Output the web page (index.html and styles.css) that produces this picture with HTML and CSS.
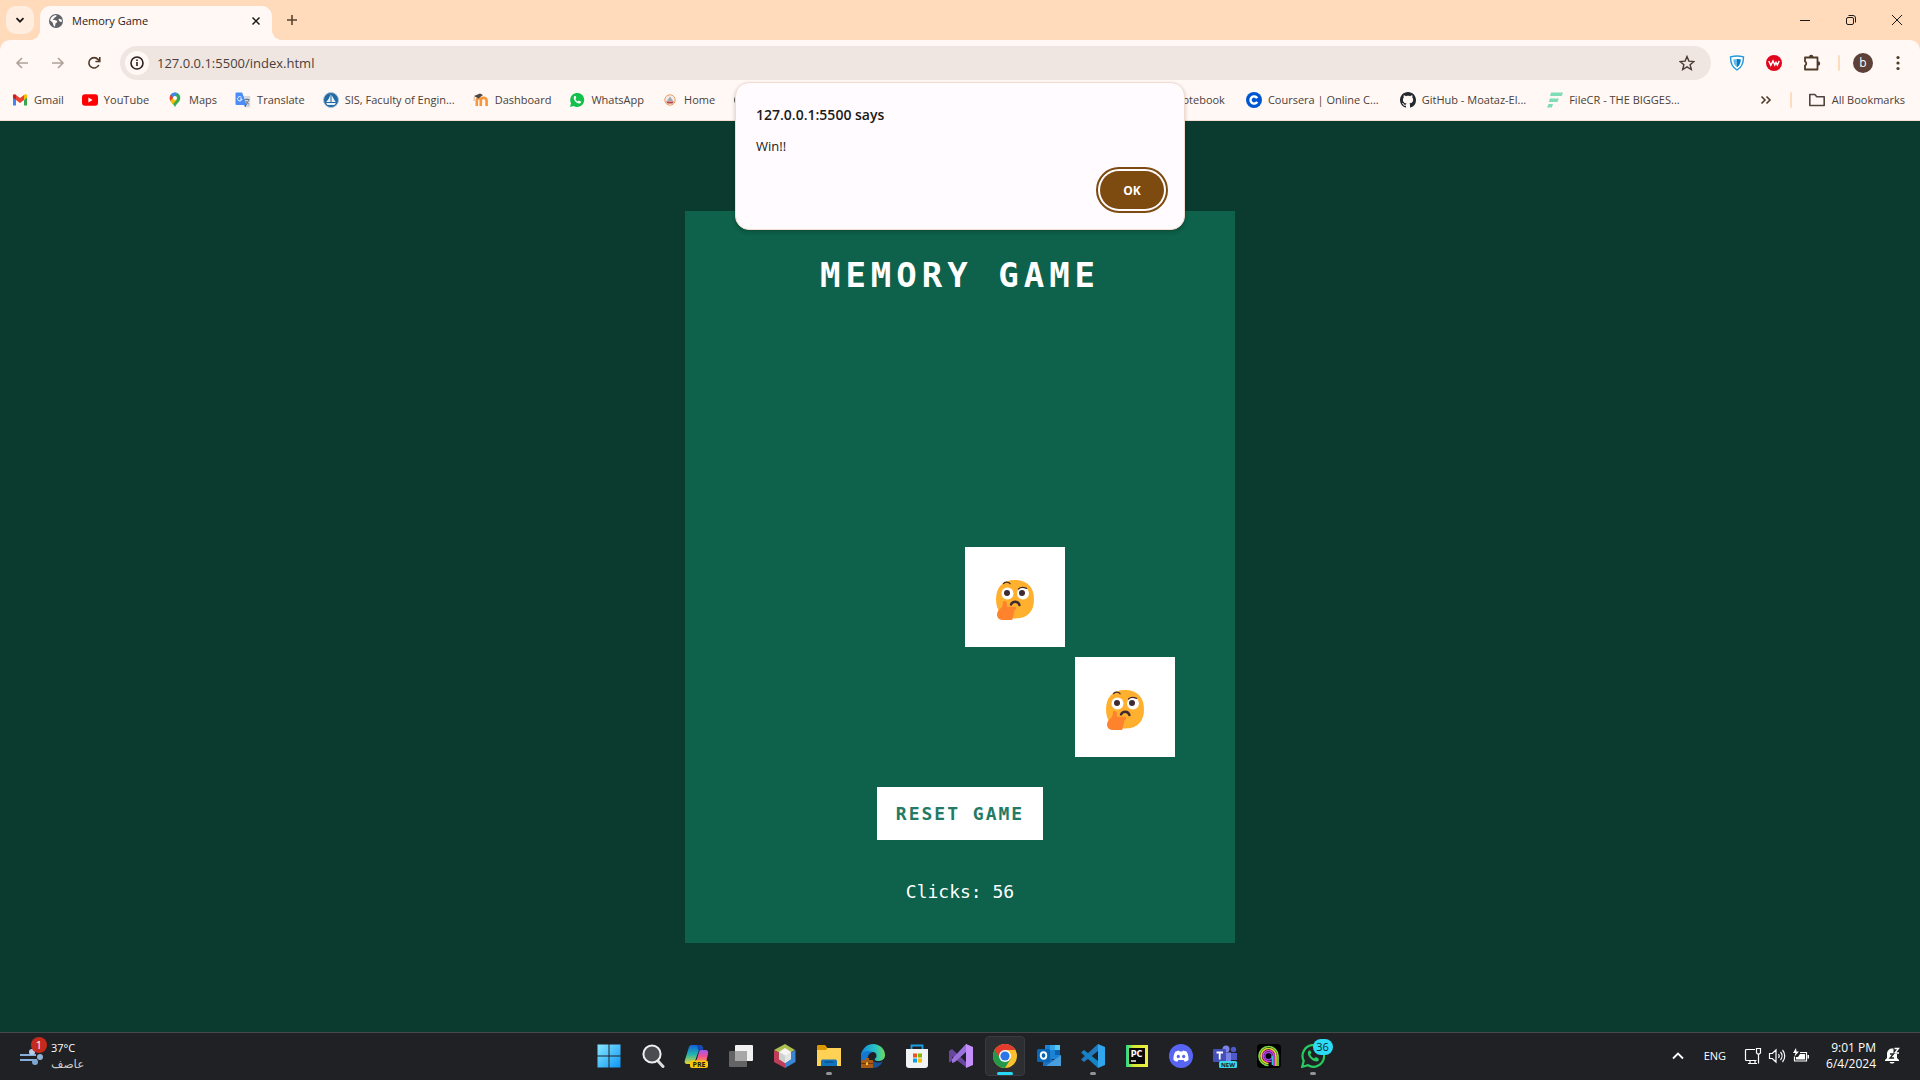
FILE: index.html
```html
<!DOCTYPE html>
<html lang="en">
<head>
<meta charset="utf-8">
<title>Memory Game</title>
<link rel="stylesheet" href="styles.css">
</head>
<body>
<svg class="defs" aria-hidden="true">
  <symbol id="thinking" viewBox="0 0 38 40">
    <path fill="#ffb02e" d="M19 0C32 0 38 8 38 19.500S32 38.500 19 38.500 0 31 0 19.500 6 0 19 0z"/>
    <circle cx="11.500" cy="13.500" r="6" fill="#fff"/><circle cx="27" cy="13.500" r="6" fill="#fff"/>
    <circle cx="11" cy="13" r="3" fill="#402a32"/><circle cx="26" cy="13" r="3" fill="#402a32"/>
    <path d="M7.500 3.500c2-1.800 5-1.800 6.500.2M22.500 9c2-2 5.500-1.800 8-.6" fill="none" stroke="#402a32" stroke-width="1.300" stroke-linecap="round"/>
    <path d="M15 24.500c1.500-3.600 7-4 8.500.6" fill="none" stroke="#402a32" stroke-width="2.400" stroke-linecap="round"/>
    <path fill="#ff822d" d="M7 22c.4-1.500 3.500-1.500 3.700.7l.4 4H18.500c2.200 0 2.200 2.800.3 3-.5 1-.7 2-1 3.500-.2 1.500-.4 2.300-.8 3-.2 2-.4 3.800-1.500 3.800H7C3 40 1 37.500 1 34.500c0-3 2-5 4-6.500 1.500-1.500 2-4 2-6z"/>
  </symbol>
</svg>

<header class="browser">
  <div class="tabstrip">
    <button class="tab-search" aria-label="Search tabs"><svg width="10" height="10" viewBox="0 0 10 10"><path d="M1.500 3.200 5 6.700l3.500-3.500" class="line line--bold"/></svg></button>
    <div class="tab">
      <svg width="16" height="16" viewBox="0 0 16 16"><circle cx="8" cy="8" r="7" fill="#5f6368"/><path d="M2 7.200C3 4 5 2.200 8.300 2c.6 1.600-.3 2-1.700 2.500-.2 1.500-1.600 1.200-1.600 2.500 2 0 4 .2 4.300 1.500.1 1.500-1.800 1.200-2 2.600 0 1 .2 1.900-.8 2.600C4.500 11.500 5.500 10 4 9zM10.500 6c1.300-1 2.500.3 3.300.8l.1 2.200c-1.500.4-3.200-.8-3.400-3z" fill="#fff8f5"/></svg>
      <span class="tab-title">Memory Game</span>
      <button class="tab-close" aria-label="Close tab"><svg width="10" height="10" viewBox="0 0 10 10"><path d="m1.500 1.500 7 7m0-7-7 7" class="line line--cross"/></svg></button>
    </div>
    <button class="tab-new" aria-label="New tab"><svg width="12" height="12" viewBox="0 0 12 12"><path d="M6 1v10M1 6h10" stroke="#5a432e" stroke-width="1.600"/></svg></button>
    <div class="window-buttons">
      <button aria-label="Minimize"><svg width="12" height="12" viewBox="0 0 12 12"><path d="M1 6.500h10" class="line"/></svg></button>
      <button aria-label="Restore"><svg width="12" height="12" viewBox="0 0 12 12"><rect x="1.500" y="3.500" width="7" height="7" rx="1.500" class="line"/><path d="M3.500 1.500h4.500a2.500 2.500 0 0 1 2.500 2.500v4.500" class="line"/></svg></button>
      <button aria-label="Close"><svg width="12" height="12" viewBox="0 0 12 12"><path d="m1 1 10 10M11 1 1 11" class="line"/></svg></button>
    </div>
  </div>

  <div class="toolbar">
    <nav class="history">
      <button class="faded" aria-label="Back"><svg width="14" height="14" viewBox="0 0 14 14"><path d="M13 7H2m5-5L2 7l5 5" class="tool"/></svg></button>
      <button class="faded" aria-label="Forward"><svg width="14" height="14" viewBox="0 0 14 14"><path d="M1 7h11M7 2l5 5-5 5" class="tool"/></svg></button>
      <button aria-label="Reload"><svg width="14" height="14" viewBox="0 0 14 14"><path d="M11.800 9A5.200 5.200 0 1 1 11 3.400L12.600 5M12.800 1v4.500H8.400" class="tool"/></svg></button>
    </nav>
    <div class="omnibox">
      <span class="site-info"><svg width="14" height="14" viewBox="0 0 14 14"><circle cx="7" cy="7" r="6" fill="none" stroke="#2a211c" stroke-width="1.600"/><path d="M7 6v4M7 3.600v1.500" stroke="#2a211c" stroke-width="1.600"/></svg></span>
      <input class="address" type="text" aria-label="Address" value="127.0.0.1:5500/index.html">
      <button aria-label="Bookmark this page"><svg width="16" height="16" viewBox="0 0 16 16"><path d="m8 1.500 1.900 4.600 5 .4-3.800 3.200 1.200 4.800L8 11.900l-4.300 2.600 1.200-4.800L1.100 6.500l5-.4z" fill="none" stroke="#4a3c33" stroke-width="1.400"/></svg></button>
    </div>
    <div class="extensions">
      <button aria-label="VPN shield"><svg width="16" height="16" viewBox="0 0 16 16"><path d="M8 1c2.500 0 4.500.4 6.500.9C14.500 8 12.500 12.500 8 15 3.500 12.500 1.500 8 1.500 1.900 3.500 1.400 5.500 1 8 1z" fill="#fff" stroke="#2499da" stroke-width="1.400"/><path d="M8 4c1.500 0 2.500.2 3.700.5C11.500 8 10.500 10.500 8 12.300 5.500 10.500 4.500 8 4.300 4.500 5.500 4.200 6.500 4 8 4z" fill="#61b9e9"/><path d="M8 4v8.300C10.500 10.500 11.500 8 11.700 4.500 10.500 4.200 9.500 4 8 4z" fill="#0878c5"/></svg></button>
      <button aria-label="VW extension"><svg width="16" height="16" viewBox="0 0 16 16"><circle cx="8" cy="8" r="8" fill="#e2061c"/><path d="m2.800 6 2 4.300L7 6l1.800 4L10 7.500l1.300 2.600L13.200 6" fill="none" stroke="#fff" stroke-width="1.500"/></svg></button>
      <button aria-label="Extensions"><svg width="18" height="18" viewBox="0 0 18 18"><path d="M2 3.500h12.500v12H2v-4a2.200 2.200 0 0 0 0-4z" fill="none" stroke="#4f3b2a" stroke-width="1.800" stroke-linejoin="round"/><path d="M6 3a2.200 2.200 0 0 1 4.400 0zM15 7.300a2.200 2.200 0 0 1 0 4.400z" fill="#4f3b2a"/></svg></button>
      <span class="divider"></span>
      <button class="avatar" aria-label="Profile">b</button>
      <button aria-label="Menu"><svg width="16" height="16" viewBox="0 0 16 16" fill="#4f3b2a"><circle cx="8" cy="2.500" r="1.600"/><circle cx="8" cy="8" r="1.600"/><circle cx="8" cy="13.500" r="1.600"/></svg></button>
    </div>
  </div>

  <nav class="bookmarks">
    <div class="bookmark-group">
      <a href="#"><svg width="16" height="16" viewBox="0 0 16 16"><path d="M1 4v9.500h3V8z" fill="#4285f4"/><path d="M12 8v5.500h3V4z" fill="#34a853"/><path d="M1 4.500V3.700C1 2 2.800 1.800 4 2.800V8L1 5.700z" fill="#c5221f"/><path d="m4 3 4 3 4-3v5l-4 3-4-3z" fill="#ea4335"/><path d="M12 2.800c1.200-1 3-.8 3 .9v2L12 8z" fill="#fbbc04"/></svg><span>Gmail</span></a>
      <a href="#"><svg width="16" height="16" viewBox="0 0 16 16"><rect y="2.300" width="16" height="11.400" rx="3" fill="#f00"/><path d="M6.400 5.600v4.800L10.600 8z" fill="#fff"/></svg><span>YouTube</span></a>
      <a href="#"><svg width="16" height="16" viewBox="0 0 16 16"><path d="M8 .5A5.300 5.300 0 0 0 2.700 6c0 4 4.300 5.500 5.300 9.500 1-4 5.300-5.500 5.300-9.500A5.300 5.300 0 0 0 8 .5z" fill="#34a853"/><path d="M8 .5A5.300 5.300 0 0 0 3.500 3l3 2.700 4-4.600A6 6 0 0 0 8 .5z" fill="#4285f4"/><path d="M3.500 3 6.500 5.700 3.300 9C2.500 7 2.500 4.500 3.500 3z" fill="#ea4335"/><path d="m3.300 9 3.200-3.500L9.800 8l-4 4.200C4.800 11 3.800 10 3.300 9z" fill="#fbbc04"/><circle cx="8" cy="6" r="2" fill="#fff"/></svg><span>Maps</span></a>
      <a href="#"><svg width="16" height="16" viewBox="0 0 16 16"><path d="M6 4h9.200v11.300H9z" fill="#d5d9de"/><path d="M9 12h3l-1.800 3.300z" fill="#3454c9"/><path d="M1.500.5h5.700L11.500 13H1.500a1 1 0 0 1-1-1V1.500a1 1 0 0 1 1-1z" fill="#4b8df8"/><path d="M6.500 5.400A2.200 2.200 0 1 0 7 7H5" fill="none" stroke="#fff"/><path d="M9.500 7.500h5M12 6.500v1.200M13.600 7.700c-.3 2-1.400 3.500-3 4.300m.2-3c.6 1.500 1.700 2.600 3.200 3.300" stroke="#6c7a87" fill="none"/></svg><span>Translate</span></a>
      <a href="#"><svg width="16" height="16" viewBox="0 0 16 16"><circle cx="8" cy="8" r="7.500" fill="#2369a5" stroke="#a8bfd1"/><path d="M7.500 2v8H3.200c2-2 3.600-5 4.300-8zM8.500 3c1.600 2.500 2.400 4.500 4.300 7H8.500zM3 11h10l-1.500 2h-7z" fill="#e8f3f8"/></svg><span>SIS, Faculty of Engin...</span></a>
      <a href="#"><svg width="16" height="16" viewBox="0 0 16 16"><path d="M3.800 14V8.500c0-3 4-3 4 0V14m0-5.500c0-3.500 5.800-3.500 5.800 0V14" fill="none" stroke="#f7953a" stroke-width="2.600"/><path d="m1 4 6-2.500L10 3 5.500 6.500z" fill="#4b4744"/><path d="M1.500 4 1 9" stroke="#d8b79c"/></svg><span>Dashboard</span></a>
      <a href="#"><svg width="16" height="16" viewBox="0 0 16 16"><path d="m1 15 1-3.800A7 7 0 1 1 4.700 14z" fill="#12c04b"/><path d="M5.500 4c-3 3 3.500 9.500 6.500 6.800l-.2-1.400-1.900-.8-1 1C7.600 9 6.700 8 6.400 7l.9-.9L6.600 4z" fill="#fff"/></svg><span>WhatsApp</span></a>
      <a href="#"><svg width="16" height="16" viewBox="0 0 16 16"><circle cx="8" cy="8" r="5.200" fill="#f7ede6" stroke="#ed9c60"/><path d="M8 4.500 4.800 9h6.400z" fill="#9eabb5"/><path d="M4 9.500h8l-1.500 2h-5z" fill="#b9423c"/></svg><span>Home</span></a>
      <a href="#" aria-label="Bookmark"><svg width="16" height="16" viewBox="0 0 16 16"><circle cx="7" cy="8" r="5" fill="none" stroke="#555" stroke-width="2"/></svg></a>
    </div>
    <div class="bookmark-group bookmark-group--end">
      <a href="#"><span>Notebook</span></a>
      <a href="#"><svg width="16" height="16" viewBox="0 0 16 16"><circle cx="8" cy="8" r="8" fill="#0056d2"/><path d="M11.200 9.800a3.600 3.600 0 1 1 0-3.600" fill="none" stroke="#fff" stroke-width="2.400"/></svg><span>Coursera | Online C...</span></a>
      <a href="#"><svg width="16" height="16" viewBox="0 0 16 16"><path fill="#24292f" d="M8 0C3.580 0 0 3.580 0 8c0 3.540 2.290 6.530 5.470 7.590.4.070.55-.17.55-.38 0-.19-.01-.82-.01-1.490-2.010.37-2.530-.49-2.690-.94-.09-.23-.48-.94-.82-1.130-.28-.15-.68-.52-.01-.53.63-.01 1.080.58 1.230.82.720 1.210 1.870.87 2.330.66.070-.52.280-.87.510-1.070-1.780-.2-3.640-.89-3.640-3.950 0-.87.310-1.590.82-2.150-.08-.2-.36-1.020.08-2.120 0 0 .67-.21 2.200.82.640-.18 1.320-.27 2-.27s1.360.09 2 .27c1.530-1.040 2.200-.82 2.200-.82.440 1.100.160 1.920.080 2.120.510.560.820 1.270.820 2.150 0 3.070-1.870 3.750-3.650 3.950.290.250.540.730.540 1.480 0 1.070-.01 1.930-.01 2.200 0 .21.150.46.550.38A8 8 0 0 0 16 8c0-4.420-3.580-8-8-8z"/></svg><span>GitHub - Moataz-El...</span></a>
      <a href="#"><svg width="16" height="16" viewBox="0 0 16 16" fill="#7fdcb8"><path d="M4 .5h12L14.700 4H3zM2.800 6.500h9L10.500 10H1.800zM1.500 12H6l-1.200 3.500H0z"/></svg><span>FileCR - THE BIGGES...</span></a>
    </div>
    <button class="more" aria-label="More bookmarks"><svg width="12" height="10" viewBox="0 0 12 10"><path d="m1.500 1.500 3.500 3.500-3.500 3.500m5-7L10 5 6.500 8.500" class="tool"/></svg></button>
    <span class="divider"></span>
    <a class="all" href="#"><svg width="18" height="16" viewBox="0 0 18 16"><path d="M1.800 2.500h5l2 2.300h7.400v8.700H1.800z" fill="none" stroke="#4f453e" stroke-width="1.600" stroke-linejoin="round"/></svg><span>All Bookmarks</span></a>
  </nav>
</header>

<main class="page">
  <section class="game">
    <h2 class="game-title">MEMORY GAME</h2>
    <div class="board">
      <div class="tile tile--matched"></div><div class="tile tile--matched"></div><div class="tile tile--matched"></div><div class="tile tile--matched"></div>
      <div class="tile tile--matched"></div><div class="tile tile--matched"></div><div class="tile tile--matched"></div><div class="tile tile--matched"></div>
      <div class="tile tile--matched"></div><div class="tile tile--matched"></div><div class="tile"><svg width="38" height="40"><use href="#thinking"/></svg></div><div class="tile tile--matched"></div>
      <div class="tile tile--matched"></div><div class="tile tile--matched"></div><div class="tile tile--matched"></div><div class="tile"><svg width="38" height="40"><use href="#thinking"/></svg></div>
    </div>
    <button class="reset">RESET GAME</button>
    <p class="clicks">Clicks: 56</p>
  </section>
</main>

<div class="alert" role="alertdialog" aria-labelledby="alert-title" aria-describedby="alert-text">
  <h1 id="alert-title">127.0.0.1:5500 says</h1>
  <p id="alert-text">Win!!</p>
  <button class="alert-ok">OK</button>
</div>

<footer class="taskbar">
  <button class="weather">
    <span class="weather-icon"><svg width="26" height="28" viewBox="0 0 26 28"><path d="M1 13h16M1 18h17" stroke="#86aedb" stroke-width="2"/><circle cx="13" cy="10" r="3" fill="#b8cce5"/><circle cx="21" cy="15" r="3" fill="#91b0d5"/><circle cx="16" cy="20" r="3" fill="#7ea6d3"/></svg><span class="weather-badge">1</span></span>
    <span class="weather-text"><span>37°C</span><span class="weather-state" lang="ar" dir="rtl">عاصف</span></span>
  </button>
  <div class="apps">
    <button aria-label="Start"><svg width="24" height="24" viewBox="0 0 24 24"><defs><linearGradient id="win" x2="1" y2="1" gradientUnits="userSpaceOnUse" x1="0" y1="0" gradientTransform="scale(24)"><stop stop-color="#8aeaff"/><stop offset="1" stop-color="#0a94f5"/></linearGradient></defs><path d="M.5.5h11v11H.5zM12.500.5h11v11h-11zM.5 12.500h11v11H.5zM12.500 12.500h11v11h-11z" fill="url(#win)"/></svg></button>
    <button aria-label="Search"><svg width="24" height="24" viewBox="0 0 24 24"><path d="m17 17 5 5.500" stroke="#ddd" stroke-width="3" stroke-linecap="round"/><circle cx="11" cy="10" r="8.600" fill="#4b4c50" stroke="#efefef" stroke-width="2"/></svg></button>
    <button aria-label="Copilot"><svg width="26" height="24" viewBox="0 0 26 24"><defs><linearGradient id="cpA" x2="0" y2="1"><stop stop-color="#1261d8"/><stop offset=".5" stop-color="#22b5ae"/><stop offset="1" stop-color="#e7d531"/></linearGradient><linearGradient id="cpB" x2="0" y2="1"><stop stop-color="#9b5cf5"/><stop offset=".5" stop-color="#ed4f99"/><stop offset="1" stop-color="#ff9545"/></linearGradient></defs><path d="M8 1h8c2 0 3 2 3 4l-4 1-4 11c-1 2-2 3-4 3H3c-2 0-3-2-2-4L5 3c.5-1.500 1.500-2 3-2z" fill="url(#cpA)"/><path d="M13 1h3c2 0 2.500 2 3 5h-5z" fill="#1747b5"/><path d="M17 6h4c3 0 3.500 2 3 4l-2 8H9c2 0 3-1 4-3l2-7c.4-1.300 1-2 2-2z" fill="url(#cpB)"/><rect x="6" y="16.500" width="18" height="7.500" rx="2" fill="#fdc60b"/><text x="15" y="23" class="tag">PRE</text></svg></button>
    <button aria-label="Task view"><svg width="24" height="24" viewBox="0 0 24 24"><rect x="6" y="1" width="18" height="16" rx="1" fill="#f1f1f1"/><rect y="7" width="18" height="16" rx="1" fill="#646465"/><path d="M6 7h12v10H6z" fill="#a7a7a8"/></svg></button>
    <button aria-label="NetBeans"><svg width="24" height="24" viewBox="0 0 24 24"><path d="m12 0 10 6-10 6L1 6z" fill="#b0bf51"/><path d="m1 6 11 6v12L1 18z" fill="#be3d58"/><path d="M22.500 6 12 12v12l10.500-6z" fill="#3986d5"/><path d="m12 4 6 4v7l-6 4-6-4V8z" fill="#f5f5f5"/><path d="m6 8 6 3.500V19l-6-4z" fill="#ccd0ce"/><path d="m12 11.500 6-3.500v7l-6 4z" fill="#e4e6e6"/></svg></button>
    <button class="running" aria-label="File Explorer"><svg width="24" height="24" viewBox="0 0 24 24"><path d="M0 2.500C0 1.500.6 1 1.500 1H8l2.500 3H24v3H0z" fill="#dc9800"/><path d="M0 6h9l1.500-2H24v18H0z" fill="#ffd154"/><path d="M4 22v-4.500C4 16 5 15.500 6 15.500h12c1 0 2 .5 2 2V22z" fill="#1273bd"/><path d="M7.500 18h9" stroke="#084f91" stroke-width="1.500"/></svg></button>
    <button aria-label="Edge"><svg width="24" height="24" viewBox="0 0 24 24"><defs><linearGradient id="edge"><stop stop-color="#1689dc"/><stop offset=".6" stop-color="#27c3c5"/><stop offset="1" stop-color="#6ddc5c"/></linearGradient></defs><path d="M0 16V10C2 4 6 0 12 0c7 0 12 5 12 11 0 4-3 6-7 6-3 0-4-1-3-2.200 1-1 1.500-1.800 1.500-2.800A4 4 0 0 0 11.500 8C7 8 5 12 6 17z" fill="url(#edge)"/><path d="M0 11c2-4 7-5 11.500-3C8 9 6 12 7 17H0z" fill="#1477d1"/><path d="M12 17c3 2 8 2 10 0-2 4-5 7-10 7z" fill="#155499"/><path d="M4 16v-2h4v2M0 16h12v8H0z" fill="#a85c16"/><path d="M0 19.500h12" stroke="#733605"/><path d="M5 18.500h2v2.500H5z" fill="#ffc53d"/></svg></button>
    <button aria-label="Microsoft Store"><svg width="24" height="24" viewBox="0 0 24 24"><path d="M6.500 7V1.500h11V7" fill="none" stroke="#18a2e5" stroke-width="1.800"/><path d="M1 5h22v16c0 2-1 3-3 3H4c-2 0-3-1-3-3z" fill="#f2f3f4"/><path d="M8 9.500h4v4H8z" fill="#f25022"/><path d="M13 9.500h4v4h-4z" fill="#7fba00"/><path d="M8 14.500h4v4H8z" fill="#00a4ef"/><path d="M13 14.500h4v4h-4z" fill="#ffb900"/></svg></button>
    <button aria-label="Visual Studio"><svg width="24" height="24" viewBox="0 0 24 24"><path d="M0 7 3 5l15 14v5L3 12.500V17l-3 1.500z" fill="#6a479f"/><path d="M3 19v-4L17 0h1v7L6 18z" fill="#9b72dd"/><path d="m17 0 7 3v18l-7 3z" fill="#c48ffb"/></svg></button>
    <button class="active" aria-label="Chrome"><svg width="24" height="24" viewBox="0 0 24 24"><circle cx="12" cy="12" r="12" fill="#fbc02d"/><path d="M12 12 1.600 6A12 12 0 0 0 12 24l5.500-9z" fill="#24984b"/><path d="M1.600 6a12 12 0 0 1 20.800 0H12l-5 8z" fill="#e33b2e"/><circle cx="12" cy="12" r="6" fill="#fff"/><circle cx="12" cy="12" r="4.600" fill="#2d76e8"/></svg></button>
    <button aria-label="Outlook"><svg width="24" height="24" viewBox="0 0 24 24"><path d="M8 1h15v14H8z" fill="#1b82d6"/><path d="M13 1h5v5h-5z" fill="#35a6e9"/><path d="M18 6h5v5h-5z" fill="#0a62b1"/><path d="M18 1h5v5h-5z" fill="#58c7f5"/><path d="M6 12h3l7 4 8-5v11H6z" fill="#1d6fc0"/><path d="M24 11v11H9z" fill="#47a0dc"/><rect y="5" width="13" height="13" rx="1.500" fill="#0866b7"/><ellipse cx="6.500" cy="11.500" rx="2.800" ry="3.300" fill="none" stroke="#fff" stroke-width="1.900"/></svg></button>
    <button class="running" aria-label="Visual Studio Code"><svg width="24" height="24" viewBox="0 0 24 24"><path d="M17 0v7L3 18l-3-2.500z" fill="#2479bd"/><path d="M17 24v-7L3 6 0 8.500z" fill="#1584c6"/><path d="m17 0 7 3v18l-7 3z" fill="#31a5ed"/></svg></button>
    <button aria-label="PyCharm"><svg width="24" height="24" viewBox="0 0 24 24"><defs><linearGradient id="pc"><stop stop-color="#25d789"/><stop offset=".35" stop-color="#d6ea31"/><stop offset="1" stop-color="#f0ee43"/></linearGradient></defs><path d="M1 1h22v22H1z" fill="url(#pc)"/><path d="M4 4h16v16H4z" fill="#080808"/><text x="11.500" y="12.500" class="pc">PC</text><path d="M6 17h5" stroke="#fff" stroke-width="1.400"/></svg></button>
    <button aria-label="Discord"><svg width="24" height="24" viewBox="0 0 24 24"><circle cx="12" cy="12" r="12" fill="#5865f2"/><path d="M6.500 7.500 10 6.500l.7 1h2.600l.7-1 3.500 1c1.500 2 2.200 5 2 8.500-1.200 1-2.500 1.500-3.800 1.700l-1-1.700H9.300l-1 1.700C7 17.500 5.700 17 4.500 16c-.2-3.500.5-6.500 2-8.500z" fill="#fff"/><ellipse cx="9.300" cy="12.500" rx="1.600" ry="1.800" fill="#5865f2"/><ellipse cx="14.700" cy="12.500" rx="1.600" ry="1.800" fill="#5865f2"/></svg></button>
    <button aria-label="Teams"><svg width="24" height="24" viewBox="0 0 24 24"><circle cx="13" cy="5" r="3.500" fill="#7b83eb"/><circle cx="20.500" cy="5.500" r="2.700" fill="#5059c9"/><path d="M9 8.500h9V18H9z" fill="#7b83eb"/><path d="M18 9h6v7h-6z" fill="#5059c9"/><rect y="5" width="13" height="13" rx="1" fill="#4250b8"/><path d="M3.500 8.500h6.500M6.700 8.500v7" stroke="#fff" stroke-width="1.800"/><rect x="6" y="17" width="18" height="7" rx="1.500" fill="#38d7e8"/><text x="15" y="23" class="tag tag--small">NEW</text></svg></button>
    <button aria-label="Alike"><svg width="24" height="24" viewBox="0 0 24 24"><rect width="24" height="24" rx="4" fill="#000"/><g fill="none" stroke-width="1.700"><path d="M21 22V12a9.500 9.500 0 1 0-9.500 9.500" stroke="#79d941"/><path d="M19 22V12a7.500 7.500 0 1 0-7.500 7.500" stroke="#e5cf31"/><path d="M17 22V12a5.500 5.500 0 1 0-5.500 5.500h3" stroke="#e13fd2"/><circle cx="11.500" cy="12" r="3.700" stroke="#8f3ee3"/><path d="M15.500 12v9" stroke="#25c7d6"/></g></svg></button>
    <button class="running" aria-label="WhatsApp"><svg width="24" height="24" viewBox="0 0 24 24"><path d="m1.200 22.800 1.500-6A10.800 10.800 0 1 1 7 21.300z" fill="none" stroke="#27cb61" stroke-width="2.200"/><path d="M8 6.500c-4.500 4 5.500 14 9.800 10l-.3-2.200-2.800-1.200-1.500 1.500c-2-1-3.300-2.300-4-4l1.300-1.500L9.300 6.500z" fill="#27cb61"/></svg><span class="count">36</span></button>
  </div>
  <div class="tray">
    <button aria-label="Show hidden icons"><svg width="12" height="8" viewBox="0 0 12 8"><path d="m1 6.500 5-5 5 5" class="tray-line tray-line--bold"/></svg></button>
    <span class="language">ENG</span>
    <span class="status">
      <svg width="18" height="18" viewBox="0 0 18 18"><path d="M11 2.500H2.500a1 1 0 0 0-1 1v9a1 1 0 0 0 1 1h10M6 13.500v3m5-3v3m-7 0h9M14.500 7v9.500" class="tray-line"/><path d="M12.500 1.500h4V6l-2 1.500-2-1.500z" class="tray-line"/></svg>
      <svg width="18" height="18" viewBox="0 0 18 18"><path d="M1.500 6.500h2.800L8 3v12l-3.700-3.500H1.500zM10.500 7c.8 1.200.8 2.800 0 4M12.500 5c2 2.300 2 5.700 0 8M14.500 3c3 3.300 3 8.700 0 12" class="tray-line"/></svg>
      <svg width="18" height="18" viewBox="0 0 18 18"><path d="M8 5.500h6.500V14h-12V9.500" class="tray-line"/><path d="M8 7h5v5.500H4V10h2zM15.500 8H17v3.500h-1.500z" fill="#fff"/><path d="M4 1 1 6h2.500L2.500 9.500 7 4.500H4.500z" fill="#fff"/></svg>
    </span>
    <span class="clock"><span>9:01 PM</span><span>6/4/2024</span></span>
    <button aria-label="Notifications"><svg width="16" height="18" viewBox="0 0 16 18"><path d="M1 13 3 11V7c0-3 2-5.500 5-5.500 1 0 1 0 1.500.2V7H13v4l2 2v1H1zM5.500 15h5c-.8 2-4.200 2-5 0z" fill="#fff"/><path d="M10.500 1.500h4L11 6h4" stroke="#fff" stroke-width="1.400" fill="none"/><path d="M6 7h3.500L6 11h4" stroke="#222" stroke-width="1.300" fill="none"/></svg></button>
  </div>
</footer>
</body>
</html>
```
FILE: styles.css
```css
* { box-sizing: border-box; }

body {
  margin: 0;
  min-height: 100vh;
  display: flex;
  flex-direction: column;
  position: relative;
  overflow-x: hidden;
  font-family: "Open Sans", "Noto Sans", sans-serif;
  background: #0b3b2f;
}

button {
  border: 0;
  padding: 0;
  background: none;
  font: inherit;
  color: inherit;
  display: flex;
  align-items: center;
  justify-content: center;
}

svg { display: block; flex: none; }
.defs { position: absolute; width: 0; height: 0; }

.line { fill: none; stroke: #1d1b1a; stroke-width: 1; }
.line--bold { stroke-width: 1.8; }
.line--cross { stroke-width: 1.5; }
.tool { fill: none; stroke: #4f3b2a; stroke-width: 1.6; }
.faded { opacity: .45; }
.divider { width: 2px; height: 16px; border-radius: 1px; background: #ffdbbc; }

/* Browser window */
.browser { background: #ffdbbc; }

.tabstrip { display: flex; height: 40px; padding-left: 6px; }

.tab-search {
  width: 28px;
  height: 28px;
  margin: 6px 6px 0 0;
  border-radius: 10px;
  background: #ffede0;
}

.tab {
  position: relative;
  display: flex;
  align-items: center;
  width: 232px;
  margin-top: 6px;
  padding: 0 11px 4px 8px;
  gap: 8px;
  border-radius: 10px 10px 0 0;
  background: #fff8f5;
}

.tab::before,
.tab::after {
  content: "";
  position: absolute;
  bottom: 0;
  width: 10px;
  height: 10px;
}

.tab::before { right: 100%; background: radial-gradient(circle at 0 0, transparent 10px, #fff8f5 10px); }
.tab::after { left: 100%; background: radial-gradient(circle at 100% 0, transparent 10px, #fff8f5 10px); }

.tab-title { flex: 1; font-size: 11px; line-height: 16px; color: #2a211c; }
.tab-new { width: 28px; height: 28px; margin: 6px 0 0 6px; }

.window-buttons { display: flex; margin-left: auto; }
.window-buttons button { width: 46px; }

.toolbar {
  display: flex;
  align-items: center;
  height: 40px;
  padding: 6px 10px 0 14px;
  border-radius: 10px 10px 0 0;
  background: #fff8f5;
}

.history { display: flex; gap: 20px; width: 106px; }
.history button { width: 16px; }

.omnibox {
  display: flex;
  align-items: center;
  flex: 1;
  height: 34px;
  padding: 0 16px 0 5px;
  gap: 8px;
  border-radius: 17px;
  background: #f0e6e1;
}

.site-info {
  display: flex;
  align-items: center;
  justify-content: center;
  width: 24px;
  height: 24px;
  border-radius: 50%;
  background: #fff8f5;
}

.address {
  flex: 1;
  border: 0;
  padding: 0;
  background: none;
  font: 13px/20px "Open Sans", "Noto Sans", sans-serif;
  color: #4a4039;
}

.extensions { display: flex; align-items: center; gap: 13px; margin-left: 14px; }
.extensions button { padding: 0 4px; }

.extensions .avatar {
  width: 20px;
  height: 20px;
  padding: 0;
  border-radius: 50%;
  background: #5d4037;
  color: #fff;
  font-size: 12px;
  line-height: 20px;
}

.bookmarks {
  display: flex;
  align-items: center;
  height: 41px;
  padding: 0 15px 0 12px;
  border-bottom: 1px solid #f5dfd2;
  background: #fff8f5;
  font-size: 11px;
  line-height: 16px;
  white-space: nowrap;
}

.bookmark-group { display: flex; gap: 18px; }
.bookmark-group--end { gap: 21px; margin: 0 80px 0 auto; }

.bookmarks a {
  display: flex;
  align-items: center;
  gap: 6px;
  color: #4a4039;
  text-decoration: none;
}

.more { margin-right: 18px; }
.bookmarks .all { margin-left: 16px; }

/* Game */
.page {
  flex: 1;
  display: flex;
  align-items: center;
  justify-content: center;
  font-family: "DejaVu Sans Mono", monospace;
  color: #fff;
}

.game {
  display: flex;
  flex-direction: column;
  align-items: center;
  padding: 40px 60px;
  background: #0e614a;
}

.game-title {
  margin: 0 0 28px;
  font-size: 34px;
  line-height: 48px;
  letter-spacing: 5px;
}

.board { display: grid; grid-template-columns: repeat(4, 100px); gap: 10px; }

.tile {
  display: flex;
  align-items: center;
  justify-content: center;
  height: 100px;
  padding-top: 6px;
  background: #fff;
}

.tile--matched { visibility: hidden; }

.reset {
  margin-top: 30px;
  padding: 15px 19px;
  background: #fff;
  color: #247a64;
  font-size: 18px;
  font-weight: 700;
  line-height: 23px;
  letter-spacing: 2px;
}

.clicks { margin: 41px 0 0; font-size: 18px; line-height: 22px; }

/* Alert dialog */
.alert {
  position: absolute;
  top: 82px;
  left: calc(50% - 225px);
  width: 450px;
  padding: 20px 17px 16px 20px;
  border: 1px solid #f3dccd;
  border-radius: 14px;
  background: #fffbff;
  box-shadow: 0 2px 4px rgba(0, 0, 0, .2);
  color: #201a17;
}

.alert h1 { margin: 0; font-size: 14px; font-weight: 600; line-height: 24px; }
.alert p { margin: 10px 0 0; font-size: 13px; line-height: 18px; }

.alert-ok {
  width: 64px;
  height: 38px;
  margin: 16px 3px 4px auto;
  border-radius: 19px;
  background: #7d4a0f;
  outline: 2px solid #7d4a0f;
  outline-offset: 2px;
  color: #fff;
  font-size: 12px;
  font-weight: 700;
}

/* Taskbar */
.taskbar {
  display: grid;
  grid-template-columns: 1fr auto 1fr;
  height: 48px;
  padding: 0 0 2px 1px;
  border-top: 1px solid #46494a;
  background: #202124;
  color: #fff;
  font-size: 11px;
  line-height: 16px;
}

.weather { justify-self: start; gap: 6px; padding-left: 18px; }
.weather-icon { position: relative; }

.weather-badge {
  position: absolute;
  top: -5px;
  right: -2px;
  width: 16px;
  height: 16px;
  border-radius: 50%;
  background: #c42b1c;
}

.weather-text { display: flex; flex-direction: column; align-items: flex-start; }
.weather-state { font-family: "DejaVu Sans", sans-serif; font-size: 12px; color: #c8c8c9; }

.apps { display: flex; align-items: center; }
.apps button { position: relative; width: 44px; height: 40px; }

.apps .active::before {
  content: "";
  position: absolute;
  inset: 0 2px 0 2px;
  border: 1px solid #3a3b3e;
  border-radius: 4px;
  background: #2d2e31;
}

.apps .active svg { position: relative; }

.apps .active::after,
.apps .running::after {
  content: "";
  position: absolute;
  bottom: 1px;
  left: 50%;
  width: 6px;
  height: 3px;
  margin-left: -3px;
  border-radius: 2px;
  background: #929397;
}

.apps .active::after { width: 16px; margin-left: -8px; background: #27d8f8; }

.count {
  position: absolute;
  top: 3px;
  right: 2px;
  width: 20px;
  height: 16px;
  border-radius: 8px;
  background: #2cdcf7;
  color: #0d2530;
}

.tag { font: 700 7px "Open Sans", sans-serif; text-anchor: middle; fill: #1b1b1b; }
.tag--small { font-size: 6px; }
.pc { font: 700 8px "DejaVu Sans", sans-serif; text-anchor: middle; fill: #fff; }

.tray { display: flex; align-items: center; justify-content: flex-end; padding-right: 20px; }
.tray-line { fill: none; stroke: #fff; stroke-width: 1.2; }
.tray-line--bold { stroke-width: 1.8; }
.language { margin: 0 18px 0 20px; }
.status { display: flex; gap: 6px; margin-right: 16px; }
.clock { display: flex; flex-direction: column; align-items: flex-end; margin-right: 8px; font-size: 12px; }
```
